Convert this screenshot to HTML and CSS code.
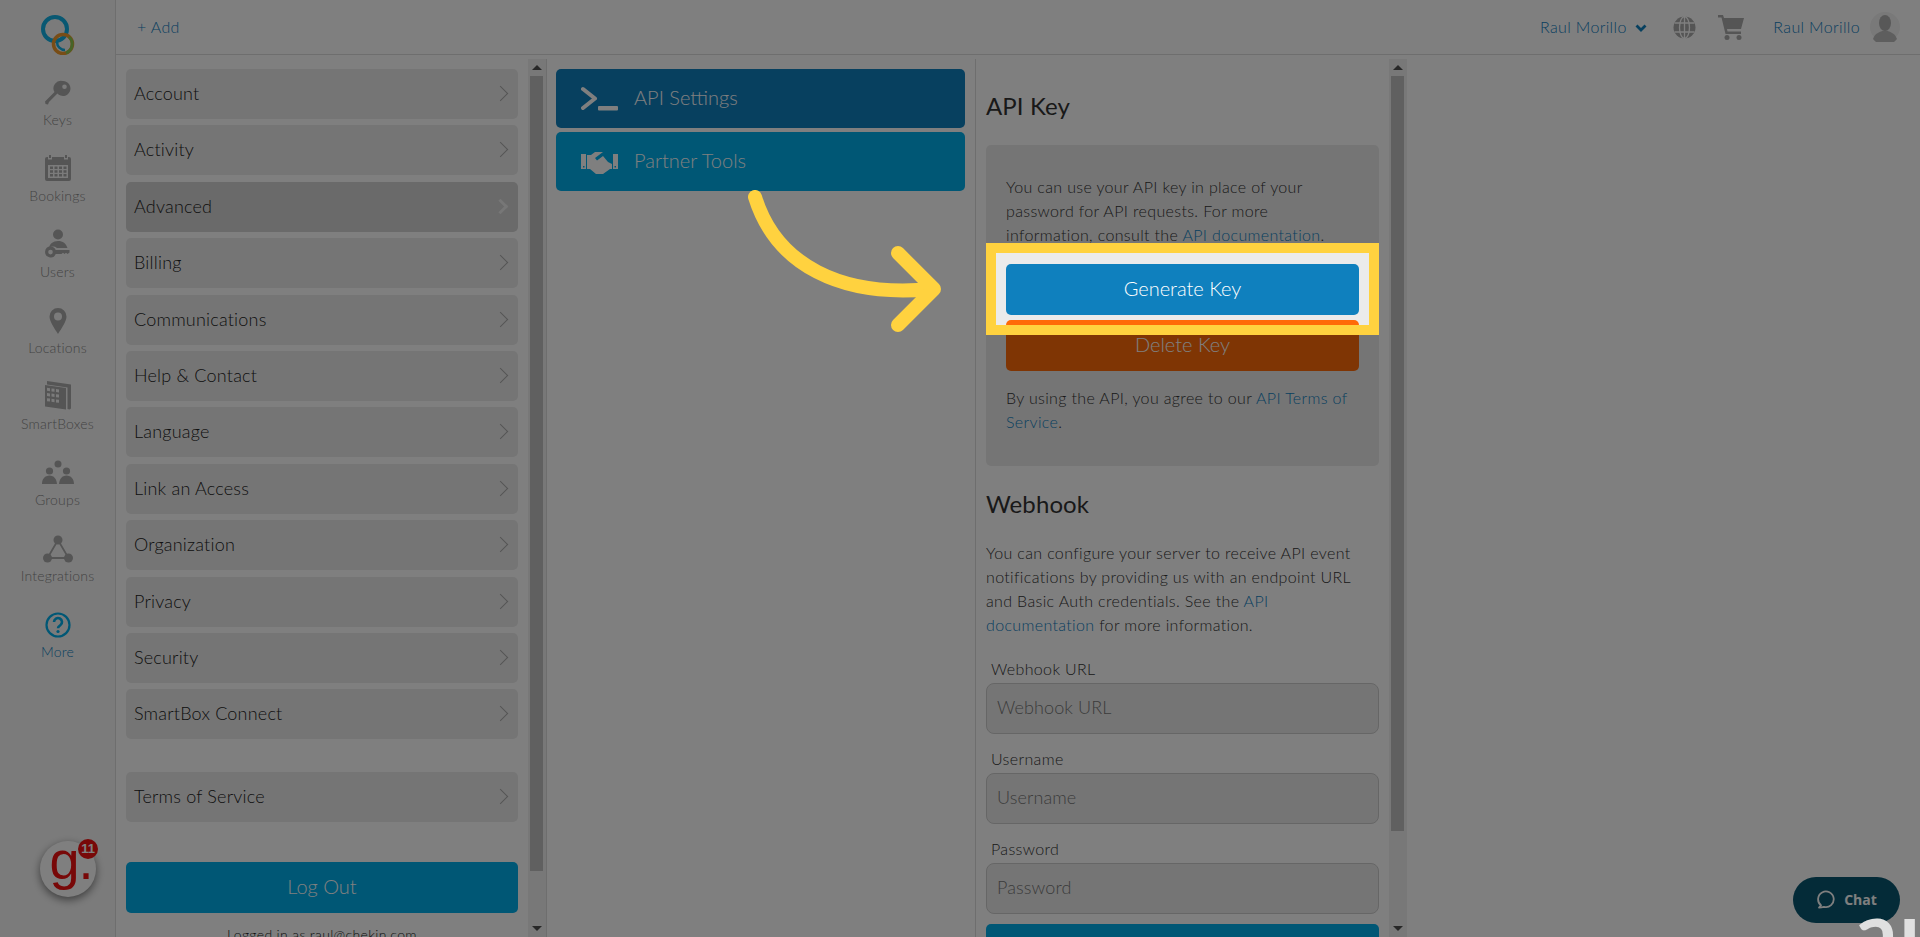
FILE: index.html
```html
<!DOCTYPE html>
<html lang="en">
<head>
    <meta charset="UTF-8">
    <meta name="viewport" content="width=device-width, initial-scale=1.0">
    <title>Settings - API Key</title>
    <link rel="stylesheet" href="styles.css">
</head>
<body>
<div class="app">
    <nav class="sidebar">
        <a class="logo" href="#">
            <svg width="34" height="40" viewBox="0 0 34 40">
                <circle cx="14" cy="14" r="12" fill="none" stroke="#12b0e4" stroke-width="4"/>
                <circle cx="22" cy="29" r="9.500" fill="none" stroke="#f09a2c" stroke-width="3.500"/>
                <path d="M28 22a9.500 9.500 0 0 1-3 16" fill="none" stroke="#8cc850" stroke-width="3"/>
                <path d="M16 27a8 8 0 0 0 8 8" fill="none" stroke="#12b0e4" stroke-width="2.500"/>
            </svg>
        </a>
        <a class="nav-item" href="#">
            <svg class="nav-icon" width="28" height="28" viewBox="0 0 28 28"><path fill-rule="evenodd" d="M19 2a7.500 7.500 0 1 1-5.600 12.500L5 23l-1 2.500-2.500-.5-.5-2.500 9.500-9.500A7.500 7.500 0 0 1 19 2zm1.500 3.500a2.300 2.300 0 1 0 0 4.600 2.300 2.300 0 0 0 0-4.600z"/></svg>
            <span>Keys</span>
        </a>
        <a class="nav-item" href="#">
            <svg class="nav-icon" width="28" height="28" viewBox="0 0 28 28"><path fill-rule="evenodd" d="M5 0h2v3h-2zM21 0h2v3h-2zM3 2h1v2.500h4V2h12v2.500h4V2h1a2 2 0 0 1 2 2v20a2 2 0 0 1-2 2H3a2 2 0 0 1-2-2V4a2 2 0 0 1 2-2zm1 8v13h20V10zm2 1.500h3v2.500H6zm4.500 0h3v2.500h-3zm4.500 0h3v2.500h-3zm4.500 0h3v2.500h-3zM6 15.300h3v2.500H6zm4.500 0h3v2.500h-3zm4.500 0h3v2.500h-3zm4.500 0h3v2.500h-3zM6 19h3v2.500H6zm4.500 0h3v2.500h-3zm4.500 0h3v2.500h-3zm4.500 0h3v2.500h-3z"/></svg>
            <span>Bookings</span>
        </a>
        <a class="nav-item" href="#">
            <svg class="nav-icon" width="28" height="30" viewBox="0 0 28 30"><circle cx="14" cy="5.500" r="5"/><path d="M5 19c.5-4 4-7 9-7s8 2.500 9.500 7H13a7 7 0 0 0-8 0z"/><path fill-rule="evenodd" d="M6.500 17.500a5.500 5.500 0 0 1 5.200 3.500H25.500v2.500l-2 1.500-1.500-1.200-1.500 1.200-1.500-1.200-1.500 1.200h-5.800a5.500 5.500 0 1 1-5.200-7.500zm0 3.300a2.300 2.300 0 1 0 0 4.600 2.300 2.300 0 0 0 0-4.600z"/></svg>
            <span>Users</span>
        </a>
        <a class="nav-item" href="#">
            <svg class="nav-icon" width="28" height="28" viewBox="0 0 28 28"><path fill-rule="evenodd" d="M14 1a8.500 8.500 0 0 1 8.500 8.500c0 5-5 12-8.500 17.500C10.500 21.500 5.500 14.500 5.500 9.500A8.500 8.500 0 0 1 14 1zm0 4.500a4 4 0 1 0 0 8 4 4 0 0 0 0-8z"/></svg>
            <span>Locations</span>
        </a>
        <a class="nav-item" href="#">
            <svg class="nav-icon" width="28" height="30" viewBox="0 0 28 30"><path fill-rule="evenodd" d="M3 0l24 3.500v24l-1.500 1-2-.5V6.500L3 3.500zM1 4l21 3v21.500L1 25.500zm2 2.800v3l3 .4v-3zm4.500.6v3l3 .4v-3zm4.500.6v3l3 .4v-3zM3 12v3l3 .4v-3zm4.500.6v3l3 .4v-3zm4.500.6v3l3 .4v-3zM3 17.200v3l3 .4v-3zm4.500.6v3l3 .4v-3zm4.500.6v3l3 .4v-3z"/></svg>
            <span>SmartBoxes</span>
        </a>
        <a class="nav-item" href="#">
            <svg class="nav-icon" width="34" height="28" viewBox="0 0 34 28"><circle cx="17" cy="5" r="3.500"/><circle cx="8.500" cy="12" r="3.600"/><circle cx="25.500" cy="12" r="3.600"/><path d="M1 25c0-5 3-8.500 7.500-8.500s7 3.500 7.500 8.500zM18 25c.5-5 3-8.500 7.500-8.500S33 20 33 25z"/></svg>
            <span>Groups</span>
        </a>
        <a class="nav-item" href="#">
            <svg class="nav-icon" width="32" height="28" viewBox="0 0 32 28"><path class="net" d="M16 5L5.500 23h21z"/><circle cx="16" cy="5" r="4.500"/><circle cx="5.500" cy="23" r="4.500"/><circle cx="26.500" cy="23" r="4.500"/></svg>
            <span>Integrations</span>
        </a>
        <a class="nav-item is-active" href="#">
            <svg class="nav-icon" width="28" height="28" viewBox="0 0 28 28"><circle cx="14" cy="14" r="11.500" fill="none" stroke="currentColor" stroke-width="2.200"/><path d="M10 11a4 4 0 1 1 6.300 3.300c-1.400 1-2.300 1.500-2.300 3" fill="none" stroke="currentColor" stroke-width="2.600"/><circle cx="14" cy="20.500" r="1.600" fill="currentColor"/></svg>
            <span>More</span>
        </a>
    </nav>

    <div class="main">
        <header class="topbar">
            <a class="link" href="#">+ Add</a>
            <div class="topbar-right">
                <a class="link org" href="#">Raul Morillo
                    <svg width="12" height="9" viewBox="0 0 12 9"><path d="M1.500 1.500L6 6l4.500-4.500" fill="none" stroke="#0f80be" stroke-width="2.800"/></svg>
                </a>
                <svg class="globe" width="23" height="23" viewBox="0 0 23 23"><circle cx="11.500" cy="11.500" r="11"/><g fill="none" stroke="#fff" stroke-width="1.300"><ellipse cx="11.500" cy="11.500" rx="5" ry="11"/><path d="M11.500 0v23M1.500 7h20M1.500 16h20"/></g></svg>
                <svg class="cart" width="26" height="25" viewBox="0 0 26 25"><path d="M0 0h5l1 3h20l-3 11H9l.5 2.500H23V19H7.500L3.500 2.500H0z"/><circle cx="9" cy="22.500" r="2.500"/><circle cx="21" cy="22.500" r="2.500"/></svg>
                <a class="link" href="#">Raul Morillo</a>
                <svg class="avatar" width="30" height="30" viewBox="0 0 30 30"><circle cx="15" cy="15" r="15" fill="#f2f2f2"/><ellipse cx="15" cy="11" rx="6" ry="8" fill="#b0b0b0"/><path d="M3 27c2-6 7-7 9-8h6c2 1 7 2 9 8a15 15 0 0 1-24 0z" fill="#bdbdbd"/></svg>
            </div>
        </header>

        <div class="panels">
            <section class="panel panel-menu">
                <div class="panel-body">
                    <ul class="menu">
                        <li class="menu-item">Account<i class="chev"></i></li>
                        <li class="menu-item">Activity<i class="chev"></i></li>
                        <li class="menu-item is-active">Advanced<i class="chev"></i></li>
                        <li class="menu-item">Billing<i class="chev"></i></li>
                        <li class="menu-item">Communications<i class="chev"></i></li>
                        <li class="menu-item">Help &amp; Contact<i class="chev"></i></li>
                        <li class="menu-item">Language<i class="chev"></i></li>
                        <li class="menu-item">Link an Access<i class="chev"></i></li>
                        <li class="menu-item">Organization<i class="chev"></i></li>
                        <li class="menu-item">Privacy<i class="chev"></i></li>
                        <li class="menu-item">Security<i class="chev"></i></li>
                        <li class="menu-item">SmartBox Connect<i class="chev"></i></li>
                    </ul>
                    <ul class="menu menu-terms">
                        <li class="menu-item">Terms of Service<i class="chev"></i></li>
                    </ul>
                    <button class="btn btn-cyan logout">Log Out</button>
                    <p class="logged">Logged in as raul@chekin.com</p>
                </div>
                <div class="scrollbar"><span class="thumb thumb-menu"></span></div>
            </section>

            <section class="panel panel-tabs">
                <a class="tab tab-blue" href="#">
                    <svg width="37" height="26" viewBox="0 0 37 26"><path d="M2 3l12 9.500L2 22" fill="none" stroke="#fff" stroke-width="4" stroke-linecap="round" stroke-linejoin="round"/><rect x="17" y="20" width="20" height="4.500" rx="1" fill="#fff"/></svg>
                    API Settings
                </a>
                <a class="tab tab-cyan" href="#">
                    <svg width="37" height="24" viewBox="0 0 37 24"><path fill="#fff" fill-rule="evenodd" d="M0 4h5v15H0zm32 0h5v15h-5zM6 5h4l4-3h8l-8 6 2 2.500 6-4.500 5 6 4 2v5h-2l-7 5-2 .5-2-.5-3 0-6-5H6zm-4 11v1.500h1.500V16zm31.500 0v1.500H35V16z"/></svg>
                    Partner Tools
                </a>
            </section>

            <section class="panel panel-detail">
                <div class="panel-body detail-body">
                    <h2 class="title">API Key</h2>
                    <div class="card">
                        <p>You can use your API key in place of your password for API requests. For more information, consult the <a href="#">API documentation</a>.</p>
                        <button class="btn btn-blue">Generate Key</button>
                        <button class="btn btn-orange">Delete Key</button>
                        <p class="terms">By using the API, you agree to our <a href="#">API Terms of Service</a>.</p>
                    </div>
                    <h2 class="title webhook-title">Webhook</h2>
                    <p>You can configure your server to receive API event notifications by providing us with an endpoint URL and Basic Auth credentials. See the <a href="#">API documentation</a> for more information.</p>
                    <label class="field-label webhook-label">Webhook URL</label>
                    <input class="field" placeholder="Webhook URL">
                    <label class="field-label">Username</label>
                    <input class="field" placeholder="Username">
                    <label class="field-label">Password</label>
                    <input class="field" placeholder="Password">
                    <button class="btn btn-cyan save">Save</button>
                </div>
                <div class="scrollbar"><span class="thumb thumb-detail"></span></div>
            </section>
        </div>
    </div>
</div>

<div class="g-badge">
    <span class="g-letter">g.</span>
    <span class="g-count">11</span>
</div>
<div class="chat">
    <svg width="20" height="20" viewBox="0 0 20 20"><path d="M3 17.500l2-2.200A7.800 7.800 0 1 1 8 16.800c-1.700.5-3.300.7-5 .7z" fill="none" stroke="#fff" stroke-width="1.800" stroke-linejoin="round"/></svg>
    Chat
</div>

<!-- dimmed page with a window cut out round the button -->
<div class="spotlight"></div>
<svg class="arrow" width="210" height="160" viewBox="0 0 210 160">
    <path d="M9 7C30 75 95 108 186 99" fill="none" stroke="#ffd23f" stroke-width="14" stroke-linecap="round"/>
    <path d="M152 63l36 36-36 36" fill="none" stroke="#ffd23f" stroke-width="14" stroke-linecap="round" stroke-linejoin="round"/>
</svg>
<div class="watermark">au</div>
</body>
</html>
```

FILE: styles.css
```css
* {
    box-sizing: border-box;
}

html, body {
    height: 100%;
    margin: 0;
    overflow: hidden;
}

body {
    font-family: "Lato", sans-serif;
    font-weight: 300;
    font-size: 16px;
    line-height: 24px;
    letter-spacing: 0.35px;
    background-color: #fff;
    color: #333;
}

a {
    text-decoration: none;
    color: #0f80be;
}

p {
    margin: 0;
}

.app {
    display: flex;
    height: 937px;
}

/* left nav */
.sidebar {
    width: 116px;
    flex-shrink: 0;
    background-color: #f7f7f7;
    border-right: 1px solid #ddd;
}

.logo {
    display: flex;
    justify-content: center;
    height: 54px;
    padding: 15px 0 0 1px;
}

.nav-item {
    display: flex;
    flex-direction: column;
    align-items: center;
    justify-content: flex-end;
    height: 76px;
    color: #888;
    font-size: 14px;
    line-height: 20px;
    letter-spacing: 0.2px;
}

.nav-icon {
    fill: #aaa;
    margin-bottom: 3px;
}

.net {
    fill: none;
    stroke: #aaa;
    stroke-width: 1.800;
}

.nav-item.is-active {
    color: #0f80be;
}

.nav-item.is-active .nav-icon {
    fill: none;
    color: #00aeeb;
}

/* top bar */
.main {
    flex: 1;
    display: flex;
    flex-direction: column;
    min-width: 0;
}

.topbar {
    height: 55px;
    flex-shrink: 0;
    display: flex;
    align-items: center;
    justify-content: space-between;
    padding: 0 20px 0 21px;
    border-bottom: 1px solid #ddd;
}

.topbar-right {
    display: flex;
    align-items: center;
}

.org svg {
    margin-left: 4px;
}

.globe {
    fill: #aaa;
    margin: 0 22px 0 26px;
}

.cart {
    fill: #aaa;
    margin-right: 29px;
}

.avatar {
    margin-left: 10px;
}

/* panels */
.panels {
    flex: 1;
    display: flex;
    min-height: 0;
    padding-top: 4px;
}

.panel {
    display: flex;
    min-height: 0;
    overflow: hidden;
}

.panel-menu {
    width: 431px;
    border-right: 1px solid #ddd;
}

.panel-body {
    flex: 1;
    min-width: 0;
    overflow: hidden;
}

.panel-menu .panel-body {
    padding: 10px 10px 0;
}

.menu {
    list-style: none;
    margin: 0;
    padding: 0;
    display: flex;
    flex-direction: column;
    gap: 6.400px;
}

.menu-item {
    position: relative;
    height: 50px;
    line-height: 49px;
    padding-left: 8px;
    background-color: #ebebeb;
    border-radius: 5px;
    font-size: 18px;
    letter-spacing: 0.2px;
    color: #222;
}

.menu-item.is-active {
    background-color: #d4d4d4;
}

.chev {
    position: absolute;
    right: 12px;
    top: 19px;
    width: 11px;
    height: 11px;
    border-top: 1px solid #aaa;
    border-right: 1px solid #aaa;
    transform: rotate(45deg);
}

.is-active .chev {
    border-color: #eee;
    border-width: 3px;
}

.menu-terms {
    margin-top: 33px;
}

.btn {
    display: block;
    width: 100%;
    height: 51px;
    padding: 0 0 4px;
    border: none;
    border-radius: 5px;
    color: #fff;
    font-family: inherit;
    font-weight: 300;
    font-size: 20px;
}

.btn-cyan {
    background-color: #00aeeb;
}

.btn-blue {
    background-color: #0f80be;
}

.btn-orange {
    background-color: #ff6a08;
    margin-top: 5px;
}

.logout {
    margin-top: 40px;
}

.logged {
    margin-top: 10px;
    text-align: center;
    font-size: 14px;
    color: #222;
}

.scrollbar {
    position: relative;
    width: 18px;
    flex-shrink: 0;
    background-color: #f1f1f1;
}

/* little arrows at both ends of the track */
.scrollbar::before,
.scrollbar::after {
    content: "";
    position: absolute;
    left: 4px;
    border-left: 5px solid transparent;
    border-right: 5px solid transparent;
}

.scrollbar::before {
    top: 6px;
    border-bottom: 5px solid #505050;
}

.scrollbar::after {
    bottom: 6px;
    border-top: 5px solid #505050;
}

.thumb {
    position: absolute;
    left: 2px;
    top: 17px;
    width: 13px;
    background-color: #c1c1c1;
}

.thumb-menu {
    height: 795px;
}

.thumb-detail {
    height: 755px;
}

.panel-tabs {
    width: 429px;
    flex-direction: column;
    padding: 10px 10px 0 9px;
    gap: 4px;
    border-right: 1px solid #ddd;
}

.tab {
    display: flex;
    align-items: center;
    gap: 16px;
    height: 59px;
    padding: 0 0 4px 25px;
    border-radius: 5px;
    color: #fff;
    font-size: 20px;
    letter-spacing: 0;
}

.tab svg {
    margin-top: 4px;
}

.tab-blue {
    background-color: #0f80be;
}

.tab-cyan {
    background-color: #00aeeb;
}

.panel-detail {
    width: 431px;
}

.detail-body {
    padding: 0 10px;
}

.title {
    margin: 32px 0 24px;
    font-size: 24px;
    line-height: 30px;
    font-weight: 400;
    letter-spacing: 0.1px;
    color: #333;
}

.card {
    padding: 30px 20px 32px;
    background-color: #ebebeb;
    border-radius: 5px;
}

.card .btn-blue {
    margin-top: 17px;
}

.card .terms {
    margin-top: 15px;
}

.webhook-title {
    margin-top: 23px;
    margin-bottom: 22px;
}

.field-label {
    display: block;
    padding-left: 5px;
    margin: 13px 0 2px;
}

.webhook-label {
    margin-top: 20px;
}

.field {
    display: block;
    width: 100%;
    height: 51px;
    padding: 0 10px 3px;
    border: 1px solid #ccc;
    border-radius: 8px;
    background-color: #ebebeb;
    font-family: inherit;
    font-weight: 300;
    font-size: 18px;
    letter-spacing: 0.1px;
}

.field::placeholder {
    color: #777;
}

.save {
    margin-top: 10px;
}

/* floating bits */
.g-badge {
    position: absolute;
    left: 40px;
    top: 841px;
    width: 56px;
    height: 56px;
    padding-left: 6px;
    border-radius: 50%;
    background-color: #fff;
    box-shadow: 0 3px 8px rgba(0, 0, 0, 0.5);
    text-align: center;
}

.g-letter {
    font-family: "Liberation Sans", sans-serif;
    font-weight: 400;
    font-size: 54px;
    line-height: 38px;
    letter-spacing: -1px;
    color: #f01010;
}

.g-count {
    position: absolute;
    right: -2px;
    top: -2px;
    width: 20px;
    height: 20px;
    border-radius: 50%;
    background-color: #f01010;
    color: #fff;
    font-family: "Liberation Sans", sans-serif;
    font-weight: 700;
    font-size: 13px;
    line-height: 20px;
    letter-spacing: 0;
}

.chat {
    position: absolute;
    left: 1793px;
    top: 877px;
    width: 107px;
    height: 46px;
    display: flex;
    align-items: center;
    justify-content: center;
    gap: 8px;
    border-radius: 23px;
    background-color: #085670;
    color: #fff;
    font-family: "Open Sans", sans-serif;
    font-weight: 700;
    font-size: 14px;
    letter-spacing: 0;
}

.spotlight {
    position: absolute;
    left: 986px;
    top: 243px;
    width: 393px;
    height: 92px;
    border: 10px solid #ffd23f;
    box-shadow: 0 0 0 3000px rgba(0, 0, 0, 0.5);
}

.arrow {
    position: absolute;
    left: 746px;
    top: 190px;
}

.watermark {
    position: absolute;
    left: 1855px;
    top: 888px;
    font-family: "Lato", sans-serif;
    font-weight: 700;
    font-size: 84px;
    line-height: 84px;
    letter-spacing: 2px;
    color: #e0e0e0;
}
```
